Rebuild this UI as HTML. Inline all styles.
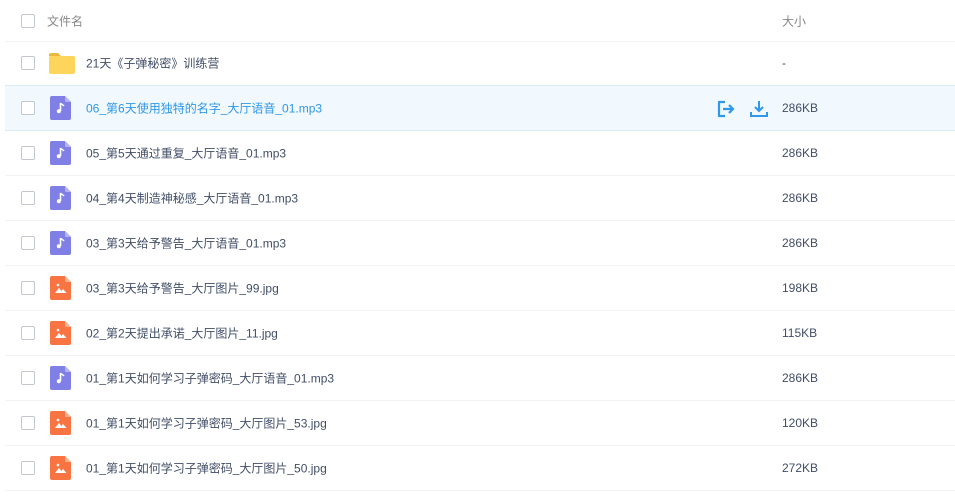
<!DOCTYPE html><html><head><meta charset="utf-8"><style>
body{margin:0;width:955px;height:502px;background:#fff;font-family:"Liberation Sans","Noto Sans CJK SC",sans-serif;font-size:12px;color:#424e67;overflow:hidden;position:relative}
.r{position:absolute;left:5px;right:0;height:44px;border-bottom:1px solid #f0f2f5}
.r.h{background:#f1f8fe;border-bottom:1px solid #dbeaf7;border-top:1px solid #dbeaf7;top:85px!important}
.cb{position:absolute;left:16px;top:50%;margin-top:-7px;width:12px;height:12px;border:1px solid #c3c8d0;border-radius:2px;background:#fff}
.ic{position:absolute;left:44px;top:50%;margin-top:-12px}
.t{position:absolute;left:81px;top:50%;transform:translateY(-50%);white-space:nowrap}
.s{position:absolute;left:777px;top:50%;transform:translateY(-50%);color:#424e67}
</style></head><body>
<div class="r" style="top:0;height:41px"><div class="cb"></div><div class="t" style="left:42px;color:#888">文件名</div><div class="s" style="color:#888">大小</div></div>
<div class="r" style="top:41px"><div class="cb"></div><svg class="ic" width="28" height="24" viewBox="0 0 28 24"><path d="M0 4a2 2 0 0 1 2-2h7l3 3H0z" fill="#e9b93f"/><rect x="0" y="5" width="26" height="18" rx="2" fill="#fdd55b"/></svg><div class="t">21天《子弹秘密》训练营</div><div class="s">-</div></div>
<div id="rows"></div>
<script>
var d=[["06_第6天使用独特的名字_大厅语音_01.mp3","286KB",0],["05_第5天通过重复_大厅语音_01.mp3","286KB",0],["04_第4天制造神秘感_大厅语音_01.mp3","286KB",0],["03_第3天给予警告_大厅语音_01.mp3","286KB",0],["03_第3天给予警告_大厅图片_99.jpg","198KB",1],["02_第2天提出承诺_大厅图片_11.jpg","115KB",1],["01_第1天如何学习子弹密码_大厅语音_01.mp3","286KB",0],["01_第1天如何学习子弹密码_大厅图片_53.jpg","120KB",1],["01_第1天如何学习子弹密码_大厅图片_50.jpg","272KB",1]];
var h="";d.forEach(function(x,i){var top=86+45*i;
var ic=x[2]?'<svg class="ic" width="24" height="24" viewBox="0 0 24 24"><path d="M3 0h13l6 6v16a2 2 0 0 1-2 2H3a2 2 0 0 1-2-2V2a2 2 0 0 1 2-2z" fill="#f87543"/><path d="M16 0v5a1 1 0 0 0 1 1h5z" fill="#fbb08f"/><path d="M6 17l4-5 2.5 3 1.5-2 3.5 4z" fill="#fff"/><circle cx="9" cy="9" r="1.3" fill="#fff"/></svg>':'<svg class="ic" width="24" height="24" viewBox="0 0 24 24"><path d="M3 0h13l6 6v16a2 2 0 0 1-2 2H3a2 2 0 0 1-2-2V2a2 2 0 0 1 2-2z" fill="#7f7fe5"/><path d="M16 0v5a1 1 0 0 0 1 1h5z" fill="#b3b3f1"/><path d="M11.5 7v8" stroke="#fff" stroke-width="1.6"/><path d="M11.5 7c1 1.5 3 2 3.5 3" stroke="#fff" stroke-width="1.4" fill="none"/><circle cx="9.8" cy="15.3" r="2" fill="#fff"/></svg>';
var act=i==0?'<svg style="position:absolute;left:711px;top:14px" width="20" height="18" viewBox="0 0 20 18"><path d="M9 2H3v14h6" stroke="#2f98e8" stroke-width="2.2" fill="none" stroke-linejoin="round"/><path d="M7 9h10M13 5l4 4-4 4" stroke="#2f98e8" stroke-width="2.2" fill="none"/></svg><svg style="position:absolute;left:745px;top:14px" width="18" height="18" viewBox="0 0 18 18"><path d="M9 1v10M5 7l4 4 4-4" stroke="#2f98e8" stroke-width="2" fill="none"/><path d="M1 12v4h16v-4" stroke="#2f98e8" stroke-width="2" fill="none"/></svg>':'';
h+='<div class="r'+(i==0?' h':'')+'" style="top:'+top+'px"><div class="cb"></div>'+ic+'<div class="t"'+(i==0?' style="color:#2f98e8"':'')+'>'+x[0]+'</div>'+act+'<div class="s">'+x[1]+'</div></div>';});
document.getElementById("rows").innerHTML=h;
</script>
</body></html>
